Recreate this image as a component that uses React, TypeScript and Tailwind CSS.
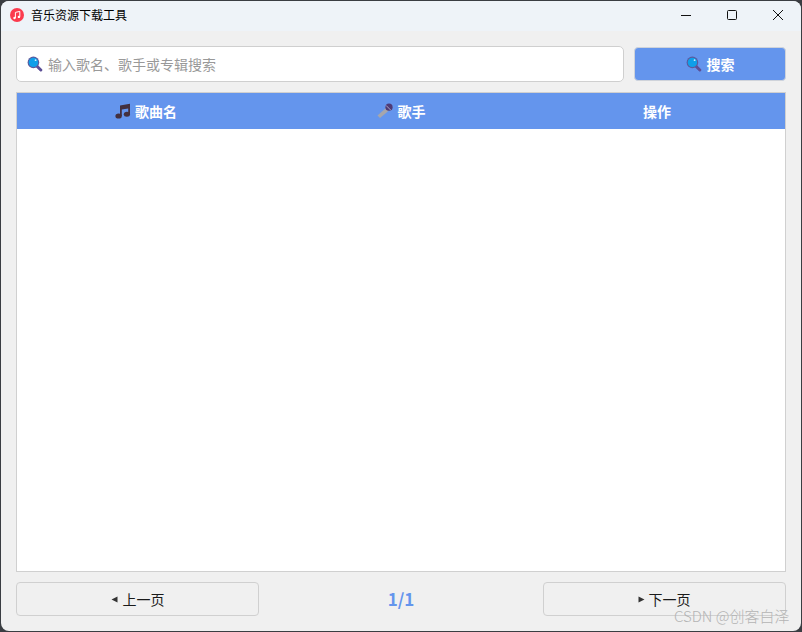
const CJK = '"Noto Sans CJK SC", "Noto Sans", sans-serif';

// magnifier emoji, as Windows draws it
function SearchIcon() {
  return (
    <svg width="16" height="16" viewBox="0 0 16 16" className="shrink-0">
      <path d="M10 10.2 L13.8 14" stroke="#5c4f96" strokeWidth="3" strokeLinecap="round" />
      <circle cx="6.4" cy="6.4" r="5.8" fill="#5c5a9e" />
      <circle cx="6.4" cy="6.4" r="4.7" fill="#0f9fe9" />
      <circle cx="8.6" cy="4.2" r="0.9" fill="#cdeefc" />
    </svg>
  );
}

function NoteIcon() {
  return (
    <svg width="16" height="16" viewBox="0 0 16 16" className="shrink-0">
      <path d="M5 2.6 L15 0.8 V11 H13.2 V5.4 L6.8 6.6 V13 H5 Z" fill="#43303f" />
      <ellipse cx="3.6" cy="13" rx="3.2" ry="2.6" fill="#43303f" />
      <ellipse cx="11.9" cy="11.2" rx="3.1" ry="2.5" fill="#43303f" />
    </svg>
  );
}

function MicIcon() {
  return (
    <svg width="16" height="16" viewBox="0 0 16 16" className="shrink-0">
      <path d="M9.5 4.5 L12 7.5 L3 15 L0.5 12.5 Z" fill="#a6a6ac" />
      <circle cx="12" cy="4.2" r="3.6" fill="#4e3a76" />
      <path d="M9 2.4 L13.8 7.2" stroke="#b9b3c9" strokeWidth="0.9" />
    </svg>
  );
}

function AppIcon() {
  return (
    <svg width="14" height="14" viewBox="0 0 14 14" className="shrink-0">
      <circle cx="7" cy="7" r="7" fill="#fb3b4e" />
      <path d="M5.4 4.4 L9.8 3.4 V8.8 M5.4 4.4 V10" stroke="#fff" strokeWidth="1" fill="none" />
      <circle cx="4.5" cy="10" r="1.2" fill="#fff" />
      <circle cx="8.9" cy="8.9" r="1.2" fill="#fff" />
    </svg>
  );
}

function PageButton({ arrow, label }: { arrow: string; label: string }) {
  return (
    <button
      type="button"
      className={`flex h-[34px] w-[243px] items-center justify-center rounded-[4px] border border-[#d0d0d0] bg-[#f0f0f0] text-[14px] text-[#1a1a1a] ${
        arrow === 'left' ? 'gap-[5px]' : 'gap-[3px]'
      }`}
    >
      {arrow === 'left' ? (
        <svg width="7" height="7" viewBox="0 0 7 7"><path d="M0.5 3.5 L6.5 0.5 V6.5 Z" fill="#333" /></svg>
      ) : (
        <svg width="7" height="7" viewBox="0 0 7 7"><path d="M6.5 3.5 L0.5 0.5 V6.5 Z" fill="#333" /></svg>
      )}
      {label}
    </button>
  );
}

export default function App() {
  return (
    <div className="h-[632px] w-[802px] overflow-hidden bg-[#3a3d42] p-px" style={{ fontFamily: CJK }}>
      <div className="relative flex h-[630px] w-[800px] flex-col overflow-hidden rounded-[8px] bg-[#f0f0f0]">
        {/* title bar */}
        <div className="flex h-[30px] shrink-0 items-center bg-[#eef3f8] pb-[2px] pl-[9px]">
          <AppIcon />
          <span className="ml-[7px] text-[12px] text-black">音乐资源下载工具</span>
          <div className="ml-auto flex items-center">
            <div className="flex h-[28px] w-[46px] items-center justify-center">
              <svg width="10" height="10" viewBox="0 0 10 10"><path d="M0 5.5 H10" stroke="#111" strokeWidth="1" /></svg>
            </div>
            <div className="flex h-[28px] w-[46px] items-center justify-center">
              <svg width="10" height="10" viewBox="0 0 10 10"><rect x="0.5" y="0.5" width="9" height="9" rx="1" fill="none" stroke="#111" strokeWidth="1" /></svg>
            </div>
            <div className="flex h-[28px] w-[46px] items-center justify-center">
              <svg width="10" height="10" viewBox="0 0 10 10"><path d="M0 0 L10 10 M10 0 L0 10" stroke="#111" strokeWidth="1" /></svg>
            </div>
          </div>
        </div>

        <div className="flex min-h-0 flex-1 flex-col pl-[15px] pr-[15px] pt-[15px]">
          {/* search row */}
          <div className="flex h-[36px] shrink-0 items-center gap-[10px]">
            <div className="flex h-[36px] w-[608px] items-center gap-[5px] rounded-[5px] border border-[#cfcfcf] bg-white pl-[10px]">
              <SearchIcon />
              <span className="text-[14px] text-[#999]">输入歌名、歌手或专辑搜索</span>
            </div>
            <button
              type="button"
              className="flex h-[34px] w-[152px] items-center justify-center gap-[5px] rounded-[4px] border border-[#cfd3da] bg-[#6495ed] text-[14px] font-bold text-white"
            >
              <SearchIcon />
              搜索
            </button>
          </div>

          {/* results table */}
          <div className="mt-[10px] flex h-[480px] w-[770px] shrink-0 flex-col border border-[#d0d0d0] bg-white">
            <div className="grid h-[36px] shrink-0 grid-cols-3 items-center bg-[#6495ed] text-[14px] font-bold text-white">
              <div className="flex items-center justify-center gap-[4px] pl-[2px]"><NoteIcon />歌曲名</div>
              <div className="flex items-center justify-center gap-[5px]"><MicIcon />歌手</div>
              <div className="flex items-center justify-center">操作</div>
            </div>
          </div>

          {/* pagination */}
          <div className="mt-[10px] flex items-center justify-between">
            <PageButton arrow="left" label="上一页" />
            <span className="text-[17px] font-bold text-[#6495ed]">1/1</span>
            <PageButton arrow="right" label="下一页" />
          </div>
        </div>

        {/* CSDN watermark over the page */}
        <span className="absolute left-[673px] top-[605px] text-[15px] font-light leading-[20px] text-[#b4b4b4]">CSDN @创客白泽</span>
      </div>
    </div>
  );
}
